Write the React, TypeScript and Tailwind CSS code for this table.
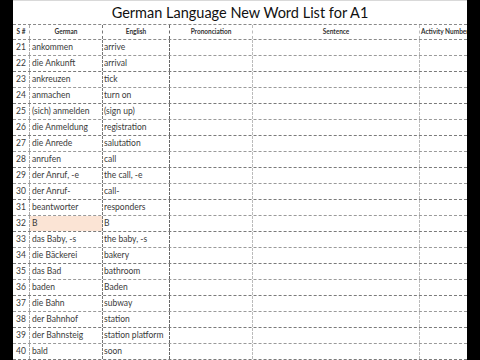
import React from "react";

const ROWS: [number, string, string][] = [
  [21, "ankommen", "arrive"],
  [22, "die Ankunft", "arrival"],
  [23, "ankreuzen", "tick"],
  [24, "anmachen", "turn on"],
  [25, "(sich) anmelden", "(sign up)"],
  [26, "die Anmeldung", "registration"],
  [27, "die Anrede", "salutation"],
  [28, "anrufen", "call"],
  [29, "der Anruf, -e", "the call, -e"],
  [30, "der Anruf-", "call-"],
  [31, "beantworter", "responders"],
  [32, "B", "B"],
  [33, "das Baby, -s", "the baby, -s"],
  [34, "die Bäckerei", "bakery"],
  [35, "das Bad", "bathroom"],
  [36, "baden", "Baden"],
  [37, "die Bahn", "subway"],
  [38, "der Bahnhof", "station"],
  [39, "der Bahnsteig", "station platform"],
  [40, "bald", "soon"],
];

// column widths in px, last one is clipped by the right black bar
const cell = "h-full shrink-0 border-r border-dashed";

export default function App() {
  return (
    <div
      className="flex h-[360px] w-[480px] overflow-hidden bg-black"
      style={{ fontFamily: "Lato, 'Open Sans', sans-serif" }}
    >
      <div className="ml-[13px] flex w-[454px] flex-col overflow-hidden bg-white">
        <div className="flex h-[24px] shrink-0 items-center justify-center border-t border-[#d9d9d9] pt-[2px] text-[14.5px] leading-none text-[#111]">
          German Language New Word List for A1
        </div>

        <div className="flex h-[16px] shrink-0 items-center border-y border-dashed border-y-[#8a8a8a] text-[6.5px] font-bold text-[#333]">
          <div className={`${cell} flex w-[17px] items-center justify-center border-r-[#aaa]`}>S #</div>
          <div className={`${cell} flex w-[73px] items-center justify-center border-r-[#777]`}>German</div>
          <div className={`${cell} flex w-[67px] items-center justify-center border-r-[#666]`}>English</div>
          <div className={`${cell} flex w-[83px] items-center justify-center border-r-[#bbb]`}>Prononciation</div>
          <div className={`${cell} flex w-[167px] items-center justify-center border-r-[#bbb]`}>Sentence</div>
          <div className="flex h-full w-[60px] shrink-0 items-center whitespace-nowrap pl-[1px]">Activity Number</div>
        </div>

        {ROWS.map(([n, de, en], i) => (
          <div
            key={n}
            className={`flex h-[16px] shrink-0 items-center border-b border-dashed text-[8.5px] text-[#3a3a3a] ${
              i % 2 === 0 ? "border-b-[#9a9a9a]" : "border-b-[#7a7a7a]"
            }`}
          >
            <div className={`${cell} flex w-[17px] items-center justify-center border-r-[#aaa]`}>{n}</div>
            <div
              className={`${cell} flex w-[73px] items-center whitespace-nowrap pl-[2px] border-r-[#777] ${
                n === 32 ? "bg-[#fbe4d5]" : ""
              }`}
            >
              {de}
            </div>
            <div className={`${cell} flex w-[67px] items-center whitespace-nowrap pl-[1px] border-r-[#666]`}>{en}</div>
            <div className={`${cell} w-[83px] border-r-[#bbb]`} />
            <div className={`${cell} w-[167px] border-r-[#bbb]`} />
            <div className="h-full w-[60px] shrink-0" />
          </div>
        ))}
      </div>
    </div>
  );
}
